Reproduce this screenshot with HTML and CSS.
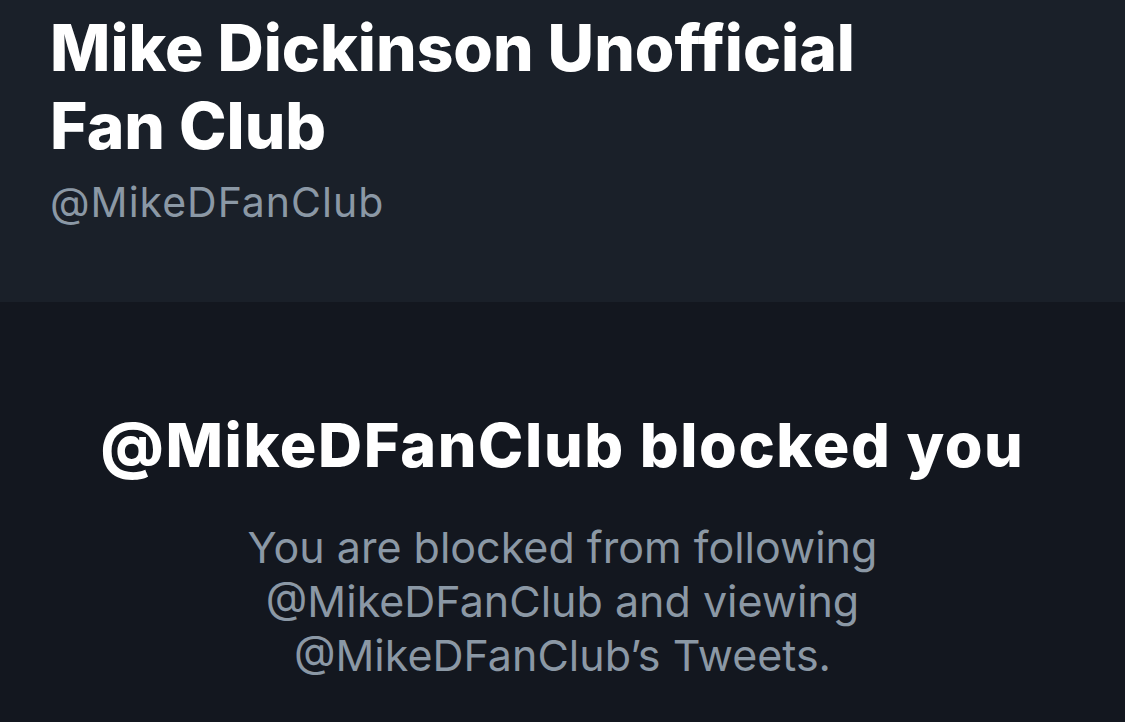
FILE: index.html
```html
<!DOCTYPE html>
<html>
<head>
<meta charset="utf-8">
<link rel="stylesheet" href="styles.css">
</head>
<body>
<div class="page">
  <header class="profile">
    <h1 class="name">Mike Dickinson Unofficial<br>Fan Club</h1>
    <div class="handle">@MikeDFanClub</div>
  </header>
  <main class="blocked">
    <h2 class="blocked-title">@MikeDFanClub blocked you</h2>
    <p class="blocked-text">You are blocked from following<br>@MikeDFanClub and viewing<br>@MikeDFanClub’s Tweets.</p>
  </main>
</div>
</body>
</html>
```
FILE: styles.css
```css
html, body {
  margin: 0;
  padding: 0;
  background: #13171f;
}
.page {
  width: 1125px;
  height: 722px;
  display: flex;
  flex-direction: column;
  font-family: Inter, "Noto Sans", sans-serif;
  overflow: hidden;
}
.profile {
  height: 302px;
  box-sizing: border-box;
  background: #1a2029;
  padding: 9px 0 0 50px;
}
.name {
  margin: 0;
  color: #ffffff;
  font-weight: 800;
  font-size: 64px;
  line-height: 78px;
  letter-spacing: 0;
}
.handle {
  margin-top: 13px;
  color: #8b98a5;
  font-size: 41px;
  line-height: 48px;
  letter-spacing: 1px;
}
.blocked {
  flex: 1;
  display: flex;
  flex-direction: column;
  align-items: center;
  text-align: center;
  padding-top: 108px;
}
.blocked-title {
  margin: 0;
  color: #ffffff;
  font-weight: 800;
  font-size: 61px;
  line-height: 70px;
  letter-spacing: 1.6px;
}
.blocked-text {
  margin: 40px 0 0;
  color: #8b98a5;
  font-size: 43px;
  line-height: 54px;
}
```
